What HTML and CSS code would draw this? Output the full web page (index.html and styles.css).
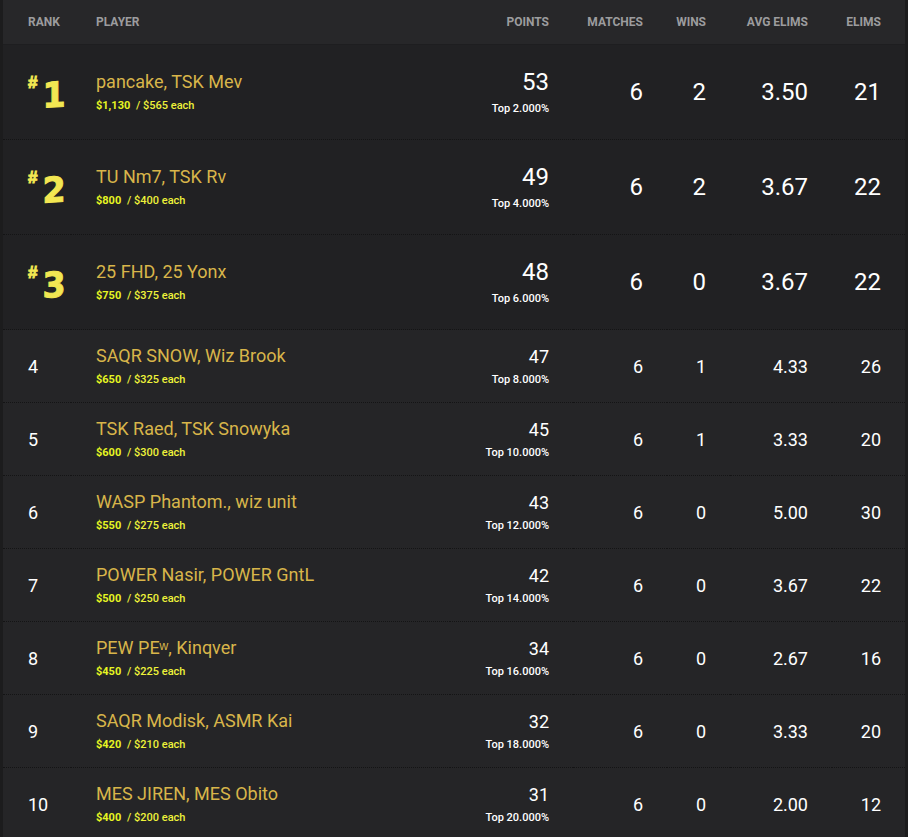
FILE: index.html
```html
<!DOCTYPE html>
<html>
<head>
<meta charset="utf-8">
<link rel="stylesheet" href="styles.css">
</head>
<body>
<div class="wrap">
<table class="board">
  <colgroup>
    <col class="c-rank"><col class="c-player"><col class="c-points"><col class="c-matches"><col class="c-wins"><col class="c-avg"><col class="c-elims">
  </colgroup>
  <thead>
    <tr>
      <th class="left">Rank</th>
      <th class="left">Player</th>
      <th>Points</th>
      <th>Matches</th>
      <th>Wins</th>
      <th>Avg Elims</th>
      <th>Elims</th>
    </tr>
  </thead>
  <tbody>
    <tr class="top">
      <td class="rank"><span class="badge"><span class="hash">#</span><span class="num">1</span></span></td>
      <td class="player"><div class="name">pancake, TSK Mev</div><div class="prize"><b>$1,130</b> / $565 each</div></td>
      <td class="points"><div class="pts">53</div><div class="pct">Top 2.000%</div></td>
      <td class="val">6</td><td class="val">2</td><td class="val">3.50</td><td class="val">21</td>
    </tr>
    <tr class="top">
      <td class="rank"><span class="badge"><span class="hash">#</span><span class="num">2</span></span></td>
      <td class="player"><div class="name">TU Nm7, TSK Rv</div><div class="prize"><b>$800</b> / $400 each</div></td>
      <td class="points"><div class="pts">49</div><div class="pct">Top 4.000%</div></td>
      <td class="val">6</td><td class="val">2</td><td class="val">3.67</td><td class="val">22</td>
    </tr>
    <tr class="top">
      <td class="rank"><span class="badge"><span class="hash">#</span><span class="num">3</span></span></td>
      <td class="player"><div class="name">25 FHD, 25 Yonx</div><div class="prize"><b>$750</b> / $375 each</div></td>
      <td class="points"><div class="pts">48</div><div class="pct">Top 6.000%</div></td>
      <td class="val">6</td><td class="val">0</td><td class="val">3.67</td><td class="val">22</td>
    </tr>
    <tr>
      <td class="rank">4</td>
      <td class="player"><div class="name">SAQR SNOW, Wiz Brook</div><div class="prize"><b>$650</b> / $325 each</div></td>
      <td class="points"><div class="pts">47</div><div class="pct">Top 8.000%</div></td>
      <td class="val">6</td><td class="val">1</td><td class="val">4.33</td><td class="val">26</td>
    </tr>
    <tr>
      <td class="rank">5</td>
      <td class="player"><div class="name">TSK Raed, TSK Snowyka</div><div class="prize"><b>$600</b> / $300 each</div></td>
      <td class="points"><div class="pts">45</div><div class="pct">Top 10.000%</div></td>
      <td class="val">6</td><td class="val">1</td><td class="val">3.33</td><td class="val">20</td>
    </tr>
    <tr>
      <td class="rank">6</td>
      <td class="player"><div class="name">WASP Phantom., wiz unit</div><div class="prize"><b>$550</b> / $275 each</div></td>
      <td class="points"><div class="pts">43</div><div class="pct">Top 12.000%</div></td>
      <td class="val">6</td><td class="val">0</td><td class="val">5.00</td><td class="val">30</td>
    </tr>
    <tr>
      <td class="rank">7</td>
      <td class="player"><div class="name">POWER Nasir, POWER GntL</div><div class="prize"><b>$500</b> / $250 each</div></td>
      <td class="points"><div class="pts">42</div><div class="pct">Top 14.000%</div></td>
      <td class="val">6</td><td class="val">0</td><td class="val">3.67</td><td class="val">22</td>
    </tr>
    <tr>
      <td class="rank">8</td>
      <td class="player"><div class="name">PEW PEʷ, Kinqver</div><div class="prize"><b>$450</b> / $225 each</div></td>
      <td class="points"><div class="pts">34</div><div class="pct">Top 16.000%</div></td>
      <td class="val">6</td><td class="val">0</td><td class="val">2.67</td><td class="val">16</td>
    </tr>
    <tr>
      <td class="rank">9</td>
      <td class="player"><div class="name">SAQR Modisk, ASMR Kai</div><div class="prize"><b>$420</b> / $210 each</div></td>
      <td class="points"><div class="pts">32</div><div class="pct">Top 18.000%</div></td>
      <td class="val">6</td><td class="val">0</td><td class="val">3.33</td><td class="val">20</td>
    </tr>
    <tr>
      <td class="rank">10</td>
      <td class="player"><div class="name">MES JIREN, MES Obito</div><div class="prize"><b>$400</b> / $200 each</div></td>
      <td class="points"><div class="pts">31</div><div class="pct">Top 20.000%</div></td>
      <td class="val">6</td><td class="val">0</td><td class="val">2.00</td><td class="val">12</td>
    </tr>
  </tbody>
</table>
</div>
</body>
</html>
```
FILE: styles.css
```css
html, body {
  margin: 0;
  padding: 0;
  background: #1c1c1d;
  height: 100%;
  overflow: hidden;
}
body {
  font-family: Roboto, "Liberation Sans", sans-serif;
  color: #ffffff;
}
.wrap {
  margin-left: 3px;
  width: 902px;
  background: #252527;
}
.board {
  width: 902px;
  border-collapse: collapse;
  table-layout: fixed;
}
.c-rank { width: 68px; }
.c-player { width: 379px; }
.c-points { width: 123px; }
.c-matches { width: 94px; }
.c-wins { width: 63px; }
.c-avg { width: 102px; }
.c-elims { width: 73px; }

th {
  height: 44px;
  padding: 0 24px 0 0;
  font-size: 12px;
  font-weight: 700;
  text-transform: uppercase;
  color: #9c9c9e;
  text-align: right;
  vertical-align: middle;
  background: #272729;
  border-bottom: 1px solid #1e1e20;
  white-space: nowrap;
}
th.left {
  text-align: left;
  padding: 0 0 0 25px;
}
td {
  height: 72px;
  padding: 0 24px 0 0;
  vertical-align: middle;
  text-align: right;
  border-bottom: 1px dotted #141415;
  background: #252527;
}
tr.top td {
  height: 94px;
  background: #212123;
}
td.rank {
  text-align: left;
  padding: 0 0 0 25px;
  font-size: 18px;
  color: #ffffff;
}
td.player {
  text-align: left;
  padding: 0 0 0 25px;
  white-space: nowrap;
}
.name {
  font-size: 18px;
  line-height: 22px;
  color: #d8b54a;
}
.prize {
  margin-top: 6px;
  font-size: 11px;
  line-height: 14px;
  font-weight: 500;
  color: #eef23a;
}
.prize b {
  font-weight: 700;
  margin-right: 3px;
  color: #e6f522;
}
.pts {
  font-size: 18px;
  line-height: 20px;
}
.pct {
  margin-top: 6px;
  font-size: 11px;
  line-height: 13px;
  font-weight: 500;
}
td.val {
  font-size: 18px;
}
tr.top .pts {
  font-size: 24px;
  line-height: 26px;
}
tr.top .pct {
  margin-top: 7px;
}
tr.top td.val {
  font-size: 24px;
}
.badge {
  display: inline-flex;
  align-items: flex-start;
  color: #f2e752;
  font-family: "DejaVu Sans", sans-serif;
  font-weight: 700;
  margin-top: -6px;
  -webkit-text-stroke: 1px #f2e752;
}
.hash {
  font-family: "Liberation Sans", sans-serif;
  font-size: 17px;
  line-height: 17px;
  margin-right: 5px;
  margin-left: 0;
}
.num {
  font-size: 35px;
  line-height: 36px;
  margin-top: 3px;
  display: inline-block;
  transform: scaleX(0.95) skewY(-3deg);
}
```
